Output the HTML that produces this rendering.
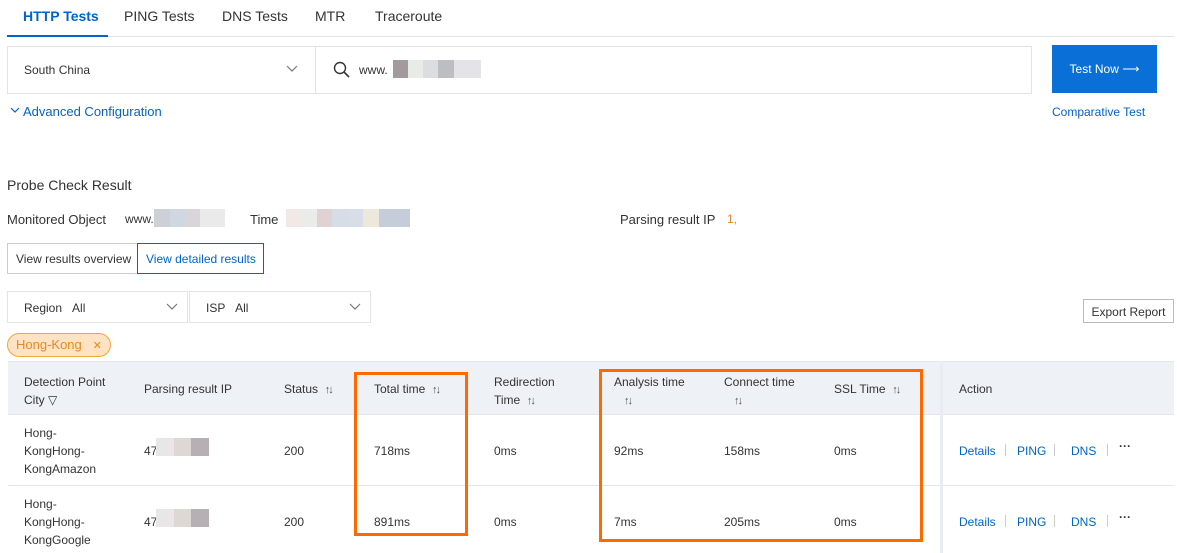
<!DOCTYPE html><html><head><style>
*{box-sizing:border-box;margin:0;padding:0}
body{width:1177px;height:553px;overflow:hidden;background:#fff;font-family:"Liberation Sans",sans-serif;font-size:12px;color:#333;position:relative}
.a{position:absolute;white-space:nowrap}
.blue{color:#0064c8}
.sort{font-size:11px;color:#555;letter-spacing:-2px}
.pp{position:absolute;width:1px;height:12px;background:#ccc}
</style></head><body>
<div class="a" style="left:23px;top:8px;font-size:14px;font-weight:bold;color:#0064c8">HTTP Tests</div>
<div class="a" style="left:124px;top:8px;font-size:14px">PING Tests</div>
<div class="a" style="left:222px;top:8px;font-size:14px">DNS Tests</div>
<div class="a" style="left:315px;top:8px;font-size:14px">MTR</div>
<div class="a" style="left:375px;top:8px;font-size:14px">Traceroute</div>
<div class="a" style="left:6px;top:36px;width:1168px;height:1px;background:#e3e3e3"></div>
<div class="a" style="left:7px;top:35px;width:101px;height:2px;background:#0064c8"></div>

<div class="a" style="left:7px;top:46px;width:1025px;height:48px;border:1px solid #e3e3e3"></div>
<div class="a" style="left:315px;top:47px;width:1px;height:46px;background:#e3e3e3"></div>
<div class="a" style="left:24px;top:63px;font-size:12px">South China</div>
<svg class="a" style="left:286px;top:65px" width="12" height="8"><path d="M1 1l5 5 5-5" fill="none" stroke="#777" stroke-width="1.2"/></svg>
<svg class="a" style="left:332px;top:60px" width="20" height="20"><circle cx="8" cy="8" r="5.5" fill="none" stroke="#333" stroke-width="1.4"/><path d="M12 12l5 5" stroke="#333" stroke-width="1.6"/></svg>
<div class="a" style="left:359px;top:63px">www.</div>
<div class="a" style="left:393px;top:60px;width:15px;height:18px;background:#a39a9f"></div>
<div class="a" style="left:408px;top:60px;width:15px;height:18px;background:#e9ece6"></div>
<div class="a" style="left:423px;top:60px;width:15px;height:18px;background:#dcdde0"></div>
<div class="a" style="left:438px;top:60px;width:16px;height:18px;background:#bebdbf"></div>
<div class="a" style="left:454px;top:60px;width:27px;height:18px;background:#e3e3e8"></div>
<div class="a" style="left:1052px;top:45px;width:105px;height:48px;background:#0a6fd6;color:#fff;font-size:12px;line-height:48px;text-align:center">Test Now ⟶</div>
<svg class="a" style="left:10px;top:107px" width="10" height="7"><path d="M1 1l4 4 4-4" fill="none" stroke="#0064c8" stroke-width="1.2"/></svg>
<div class="a blue" style="left:23px;top:104px;font-size:13px">Advanced Configuration</div>
<div class="a blue" style="left:1052px;top:105px">Comparative Test</div>

<div class="a" style="left:7px;top:177px;font-size:14px">Probe Check Result</div>
<div class="a" style="left:7px;top:212px;font-size:13px">Monitored Object</div>
<div class="a" style="left:125px;top:212px">www.</div>
<div class="a" style="left:154px;top:209px;width:71px;height:18px;background:linear-gradient(90deg,#cdd0d4 0 16px,#cfd7e0 16px 31px,#d8d6da 31px 46px,#eaeaea 46px)"></div>
<div class="a" style="left:250px;top:212px;font-size:13px">Time</div>
<div class="a" style="left:286px;top:209px;width:124px;height:18px;background:linear-gradient(90deg,#f0e9e5 0 16px,#e9ecea 16px 31px,#e0d1d3 31px 46px,#d6dde6 46px 62px,#d9dde8 62px 77px,#ece8dc 77px 93px,#c5cddb 93px)"></div>
<div class="a" style="left:620px;top:212px;font-size:13px">Parsing result IP</div>
<div class="a" style="left:727px;top:212px;color:#e8891f">1,</div>

<div class="a" style="left:7px;top:243px;width:131px;height:31px;border:1px solid #ccc;line-height:31px;padding-left:8px">View results overview</div>
<div class="a blue" style="left:137px;top:243px;width:127px;height:31px;border:1px solid #0064c8;line-height:31px;padding-left:8px">View detailed results</div>

<div class="a" style="left:7px;top:291px;width:181px;height:32px;border:1px solid #e3e3e3;line-height:32px;padding-left:16px">Region &nbsp;&nbsp;All</div>
<svg class="a" style="left:166px;top:303px" width="12" height="8"><path d="M1 1l5 5 5-5" fill="none" stroke="#777" stroke-width="1.2"/></svg>
<div class="a" style="left:189px;top:291px;width:182px;height:32px;border:1px solid #e3e3e3;line-height:32px;padding-left:16px">ISP &nbsp;&nbsp;All</div>
<svg class="a" style="left:349px;top:303px" width="12" height="8"><path d="M1 1l5 5 5-5" fill="none" stroke="#777" stroke-width="1.2"/></svg>
<div class="a" style="left:1083px;top:299px;width:91px;height:24px;border:1px solid #bbb;line-height:24px;text-align:center">Export Report</div>
<div class="a" style="left:7px;top:333px;width:104px;height:24px;border:1px solid #f5a443;background:#ffe3c2;border-radius:12px;line-height:22px;padding-left:8px;color:#e8891f;font-size:13px">Hong-Kong &nbsp;&nbsp;<span style="font-size:11px">✕</span></div>

<div class="a" style="left:8px;top:361px;width:1166px;height:54px;background:#eef1f6;border-top:1px solid #e3e6eb"></div>
<div class="a" style="left:8px;top:414px;width:1166px;height:1px;background:#e3e6eb"></div>
<div class="a" style="left:8px;top:485px;width:1166px;height:1px;background:#e3e6eb"></div>
<div class="a" style="left:940px;top:361px;width:3px;height:192px;background:#e9ecf0"></div>

<div class="a" style="left:24px;top:373px;line-height:18px">Detection Point<br>City ▽</div>
<div class="a" style="left:144px;top:382px">Parsing result IP</div>
<div class="a" style="left:284px;top:382px">Status &nbsp;<span class="sort">↑↓</span></div>
<div class="a" style="left:374px;top:382px">Total time &nbsp;<span class="sort">↑↓</span></div>
<div class="a" style="left:494px;top:373px;line-height:18px">Redirection<br>Time &nbsp;<span class="sort">↑↓</span></div>
<div class="a" style="left:614px;top:373px;line-height:18px">Analysis time<br>&nbsp;&nbsp;&nbsp;<span class="sort">↑↓</span></div>
<div class="a" style="left:724px;top:373px;line-height:18px">Connect time<br>&nbsp;&nbsp;&nbsp;<span class="sort">↑↓</span></div>
<div class="a" style="left:834px;top:382px">SSL Time &nbsp;<span class="sort">↑↓</span></div>
<div class="a" style="left:959px;top:382px">Action</div>

<div class="a" style="left:24px;top:424px;line-height:18px">Hong-<br>KongHong-<br>KongAmazon</div>
<div class="a" style="left:144px;top:444px">47</div>
<div class="a" style="left:156px;top:438px;width:53px;height:18px;background:linear-gradient(90deg,#e8e6e6 0 18px,#ddd8d3 18px 35px,#b6b0b4 35px)"></div>
<div class="a" style="left:284px;top:444px">200</div>
<div class="a" style="left:374px;top:444px">718ms</div>
<div class="a" style="left:494px;top:444px">0ms</div>
<div class="a" style="left:614px;top:444px">92ms</div>
<div class="a" style="left:724px;top:444px">158ms</div>
<div class="a" style="left:834px;top:444px">0ms</div>
<div class="a blue" style="left:959px;top:444px">Details</div><div class="pp" style="left:1005px;top:444px"></div>
<div class="a blue" style="left:1017px;top:444px">PING</div><div class="pp" style="left:1054px;top:444px"></div>
<div class="a blue" style="left:1071px;top:444px">DNS</div><div class="pp" style="left:1107px;top:444px"></div>
<div class="a" style="left:1119px;top:439px;font-weight:bold">···</div>

<div class="a" style="left:24px;top:495px;line-height:18px">Hong-<br>KongHong-<br>KongGoogle</div>
<div class="a" style="left:144px;top:515px">47</div>
<div class="a" style="left:156px;top:509px;width:53px;height:18px;background:linear-gradient(90deg,#e8e6e6 0 18px,#ddd8d3 18px 35px,#b6b0b4 35px)"></div>
<div class="a" style="left:284px;top:515px">200</div>
<div class="a" style="left:374px;top:515px">891ms</div>
<div class="a" style="left:494px;top:515px">0ms</div>
<div class="a" style="left:614px;top:515px">7ms</div>
<div class="a" style="left:724px;top:515px">205ms</div>
<div class="a" style="left:834px;top:515px">0ms</div>
<div class="a blue" style="left:959px;top:515px">Details</div><div class="pp" style="left:1005px;top:515px"></div>
<div class="a blue" style="left:1017px;top:515px">PING</div><div class="pp" style="left:1054px;top:515px"></div>
<div class="a blue" style="left:1071px;top:515px">DNS</div><div class="pp" style="left:1107px;top:515px"></div>
<div class="a" style="left:1119px;top:510px;font-weight:bold">···</div>

<div class="a" style="left:354px;top:372px;width:114px;height:164px;border:3px solid #ff6a00"></div>
<div class="a" style="left:599px;top:369px;width:324px;height:173px;border:3px solid #ff6a00"></div>
</body></html>
